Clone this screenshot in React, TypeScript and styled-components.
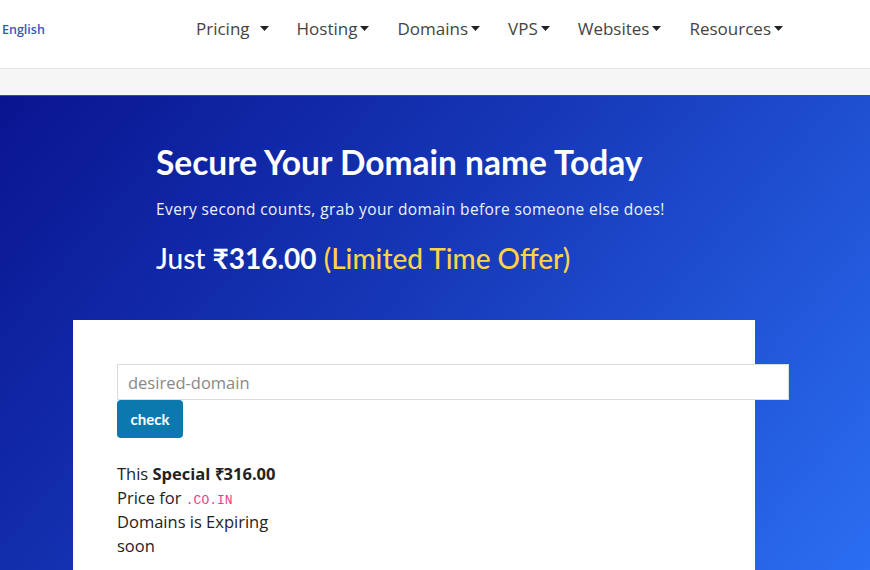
import styled, { createGlobalStyle } from 'styled-components';

const GlobalStyle = createGlobalStyle`
  html, body {
    margin: 0;
    padding: 0;
    overflow: hidden;
  }
  body {
    font-family: "Open Sans", "Noto Sans", sans-serif;
    background: #fff;
  }
`;

const navItems = ['Pricing', 'Hosting', 'Domains', 'VPS', 'Websites', 'Resources'];

const Caret = () => (
  <svg width="9" height="5" viewBox="0 0 9 5" aria-hidden="true">
    <path d="M0 0h9L4.5 5z" fill="#222" />
  </svg>
);

export default function App() {
  return (
    <Page>
      <GlobalStyle />
      <Header>
        <Lang>English</Lang>
        <Nav>
          {navItems.map((item, i) => (
            <NavItem key={item} $wide={i === 0}>
              {item}
              <Caret />
            </NavItem>
          ))}
        </Nav>
      </Header>
      <SubBar />
      <Hero>
        <HeroText>
          <Title>Secure Your Domain name Today</Title>
          <Subtitle>Every second counts, grab your domain before someone else does!</Subtitle>
          <Offer>
            Just <Price>₹316.00</Price> <Limited>(Limited Time Offer)</Limited>
          </Offer>
        </HeroText>
        <Card>
          <DomainInput placeholder="desired-domain" />
          <CheckButton>check</CheckButton>
          <Note>
            This <strong>Special ₹316.00</strong> Price for <Code>.CO.IN</Code> Domains is Expiring soon
          </Note>
        </Card>
      </Hero>
    </Page>
  );
}

const Page = styled.div`
  width: 870px;
  height: 570px;
  overflow: hidden;
  display: flex;
  flex-direction: column;
`;

const Header = styled.header`
  flex-shrink: 0;
  height: 68px;
  box-sizing: border-box;
  display: flex;
  align-items: center;
  padding: 0 0 11px 2px;
  background: #fff;
`;

const Lang = styled.span`
  font-family: "Open Sans", sans-serif;
  font-size: 12.5px;
  font-weight: 600;
  color: #3556c0;
  width: 194px;
  padding-top: 2px;
`;

const Nav = styled.nav`
  display: flex;
  align-items: center;
  gap: 28px;
`;

const NavItem = styled.a<{ $wide?: boolean }>`
  display: flex;
  align-items: center;
  gap: ${(p) => (p.$wide ? '10px' : '3px')};
  font-family: "Open Sans", sans-serif;
  font-size: 17px;
  color: #444;
`;

const SubBar = styled.div`
  flex-shrink: 0;
  height: 26px;
  background: #f6f6f6;
  border-top: 1px solid #e6e6e6;
`;

const Hero = styled.section`
  flex: 1;
  min-height: 0;
  overflow: hidden;
  background: linear-gradient(130deg, #0a1490 0%, #1638b8 45%, #2b6ef2 100%);
  border-top: 1px solid #3446b8;
  padding: 46px 0 0 73px;
`;

const HeroText = styled.div`
  padding-left: 83px;
  color: #fff;
`;

const Title = styled.h1`
  margin: 0;
  font-family: "Lato", sans-serif;
  font-weight: 700;
  font-size: 33.5px;
  line-height: 40px;
`;

const Subtitle = styled.p`
  margin: 16px 0 0;
  font-size: 15.5px;
  letter-spacing: 0.4px;
  line-height: 22px;
  color: #eef0ff;
`;

const Offer = styled.p`
  margin: 21px 0 0;
  font-family: "Lato", sans-serif;
  font-size: 28px;
  line-height: 34px;
  font-weight: 500;
`;

const Price = styled.span`
  font-weight: 700;
`;

const Limited = styled.span`
  color: #ffd24a;
`;

const Card = styled.div`
  margin-top: 45px;
  width: 682px;
  height: 260px;
  background: #fff;
  padding: 44px 0 0 44px;
  box-sizing: border-box;
`;

const DomainInput = styled.input`
  display: block;
  width: 672px;
  height: 36px;
  box-sizing: border-box;
  border: 1px solid #dcdcdc;
  padding: 0 10px;
  font-family: "Open Sans", sans-serif;
  font-size: 16.5px;
  color: #333;
  outline: none;
  &::placeholder {
    color: #888;
  }
`;

const CheckButton = styled.button`
  display: block;
  width: 66px;
  height: 38px;
  border: none;
  border-radius: 4px;
  background: #0b79ad;
  color: #fff;
  font-family: "Lato", sans-serif;
  font-weight: 700;
  font-size: 15px;
`;

const Note = styled.p`
  margin: 24px 0 0;
  width: 175px;
  font-family: "Open Sans", sans-serif;
  font-size: 16.5px;
  line-height: 24px;
  color: #222;
  strong {
    font-weight: 700;
  }
`;

const Code = styled.code`
  font-family: "Liberation Mono", monospace;
  font-size: 13px;
  line-height: 1;
  color: #e83e8c;
`;
